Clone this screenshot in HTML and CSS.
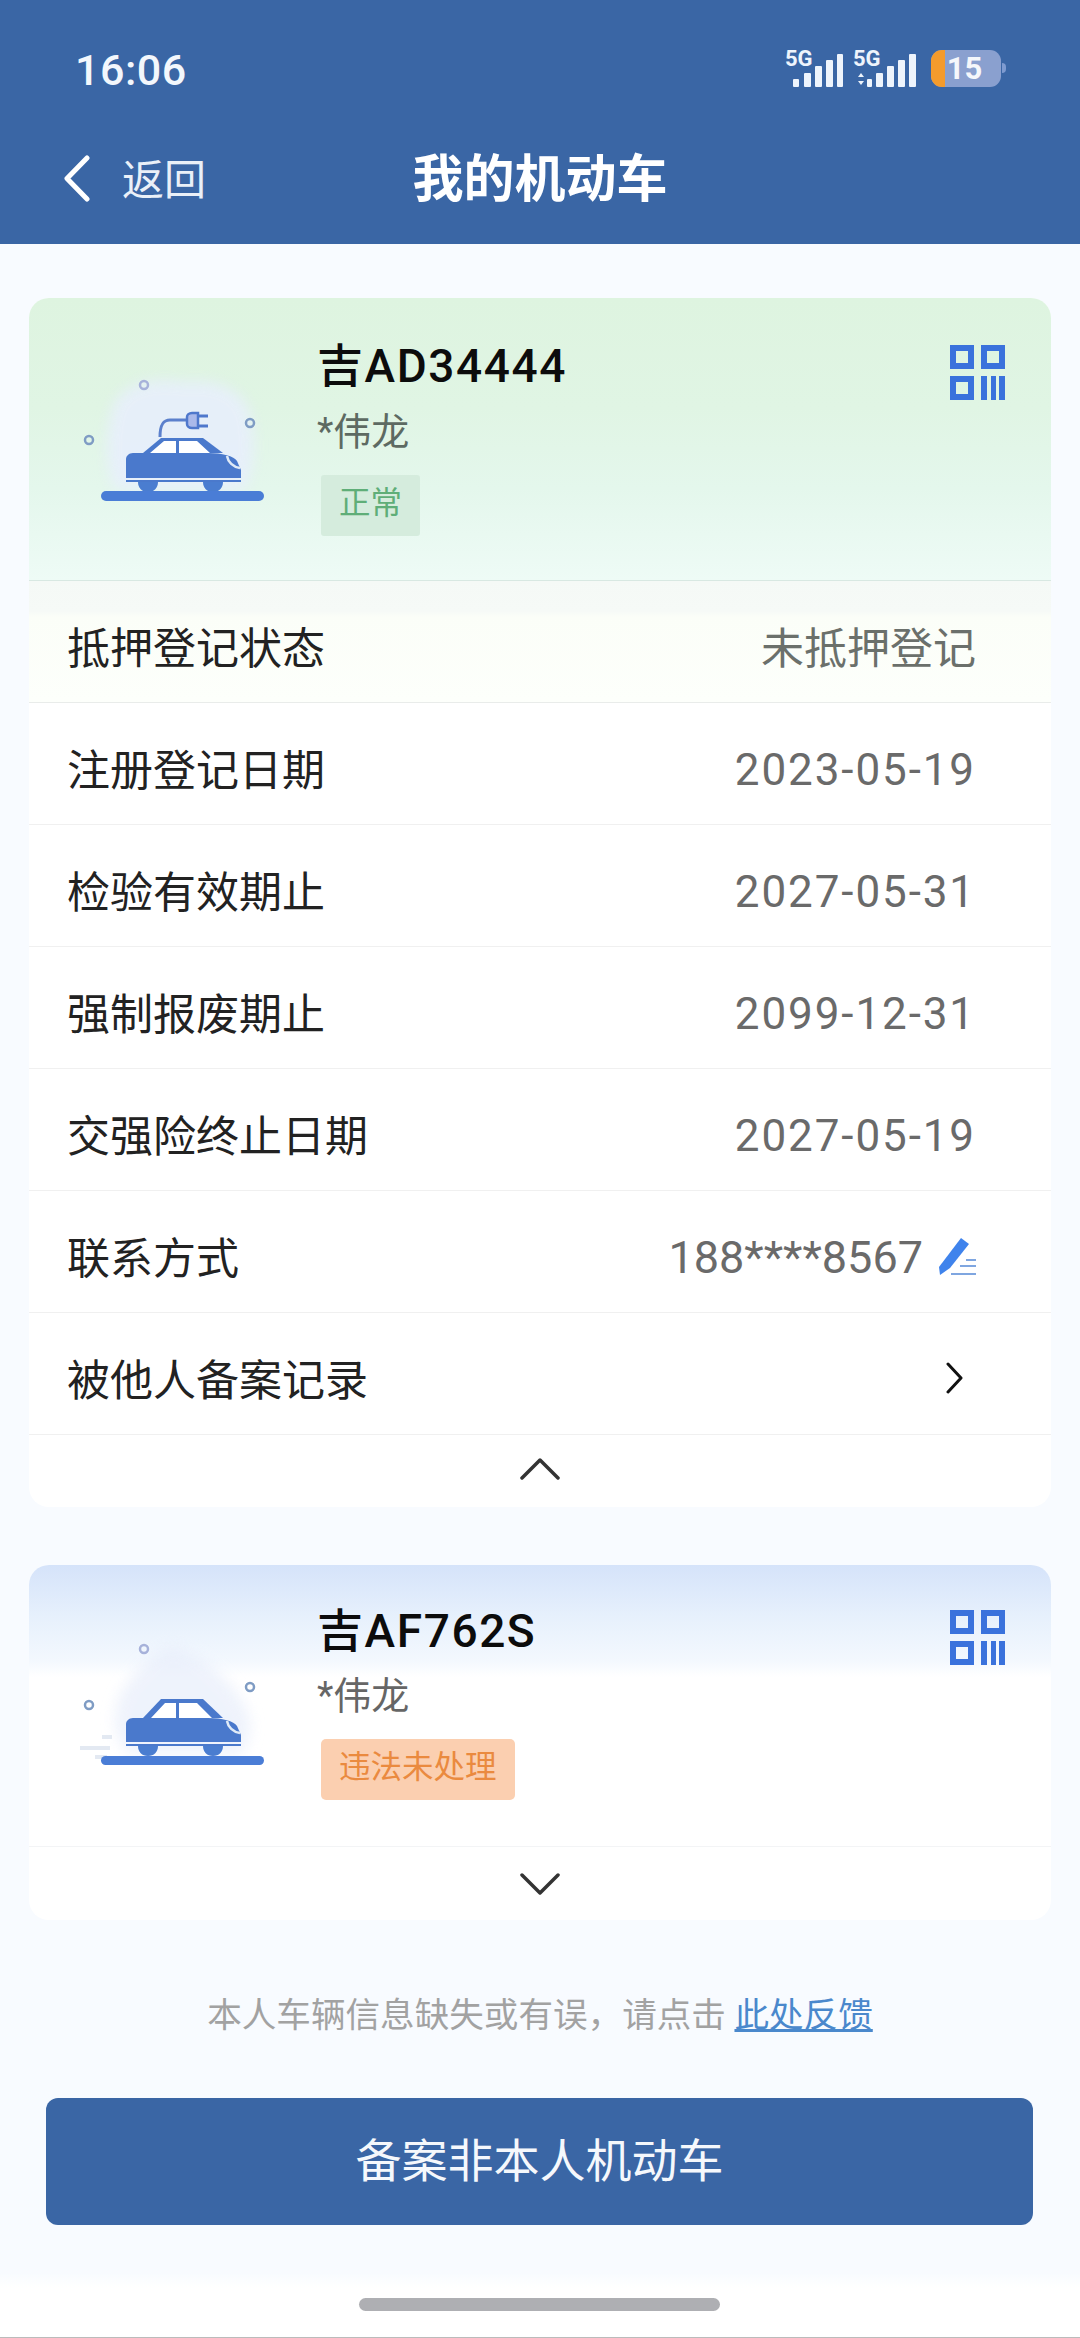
FILE: index.html

```html
<!DOCTYPE html>
<html lang="zh-CN">
<head>
    <meta charset="UTF-8">
    <meta name="viewport" content="width=device-width, initial-scale=1.0">
    <title>我的机动车</title>
    <link rel="stylesheet" href="styles.css">
</head>
<body>
    <header class="top">
        <div class="status">
            <span class="clock">16:06</span>
            <div class="status-right">
                <svg class="signal" width="136" height="43" viewBox="-6 -6 136 43">
                    <text x="-2" y="16" class="signal-text">5G</text>
                    <rect x="6" y="29" width="6" height="8" rx="1"/>
                    <rect x="17" y="23" width="7" height="14" rx="1"/>
                    <rect x="28" y="16" width="7" height="21" rx="1"/>
                    <rect x="39" y="10" width="7" height="27" rx="1"/>
                    <rect x="50" y="4" width="6" height="33" rx="1"/>
                    <text x="66" y="16" class="signal-text">5G</text>
                    <path d="M71 27l3-4 3 4zM71 31l3 4 3-4z"/>
                    <rect x="80" y="29" width="5" height="8" rx="1"/>
                    <rect x="89" y="23" width="7" height="14" rx="1"/>
                    <rect x="100" y="16" width="7" height="21" rx="1"/>
                    <rect x="111" y="10" width="7" height="27" rx="1"/>
                    <rect x="122" y="4" width="7" height="33" rx="1"/>
                </svg>
                <div class="battery">
                    <span class="battery-fill"></span>
                    <span class="battery-num">15</span>
                </div>
                <span class="battery-nub"></span>
            </div>
        </div>
        <nav class="nav">
            <a class="back">
                <svg width="30" height="47" viewBox="0 0 30 47"><path d="M25 3L5 23.5 25 44" fill="none" stroke="#fff" stroke-width="5" stroke-linecap="round" stroke-linejoin="round"/></svg>
                <span>返回</span>
            </a>
            <h1>我的机动车</h1>
            <span></span>
        </nav>
    </header>

    <main class="content">
        <section class="card">
            <div class="car-head car-head-green">
                <svg class="car-pic" width="200" height="160" viewBox="0 0 200 160">
                    <defs>
                        <filter id="soft" x="-20%" y="-20%" width="140%" height="140%"><feGaussianBlur stdDeviation="7"/></filter>
                    </defs>
                    <path d="M32 40C40 12 75 6 105 12c30-4 62 8 66 36 5 30 3 52-8 72H36C24 95 26 65 32 40z" fill="#e8eefe" opacity=".8" filter="url(#soft)"/>
                    <g fill="none" stroke-width="2.5">
                        <circle cx="64" cy="15" r="4" stroke="#a7b2da"/>
                        <circle cx="170" cy="53" r="4" stroke="#7f9cc4"/>
                        <circle cx="9" cy="70" r="4" stroke="#7f9cc4"/>
                    </g>
                    <path d="M80 67c0-12 3-17 10-17h18" fill="none" stroke="#5b80cc" stroke-width="3"/>
                    <path d="M118 46h10M118 56h10" stroke="#4f78cc" stroke-width="3"/>
                    <path d="M112 43h6v15h-6c-3 0-5-2-5-4v-7c0-2 2-4 5-4z" fill="#aab9ea" stroke="#4f78cc" stroke-width="2.5"/>
                    <path d="M63 83l18-15h42l20 15z" fill="#4a79cc"/>
                    <path d="M70 83l14-12h12v12zM99 71h18l13 12H99z" fill="#fff"/>
                    <path d="M53 83h75c14 0 26 3 29 8l4 9v8H46V89c0-3 3-6 7-6z" fill="#4a79cc"/>
                    <path d="M147 86c1 6 6 11 13 12" fill="none" stroke="#dfeaf7" stroke-width="2.5"/>
                    <path d="M46 111h115" stroke="#4a79cc" stroke-width="2"/>
                    <path d="M58 112h20c0 6-4 10-10 10s-10-4-10-10zM123 112h20c0 6-4 10-10 10s-10-4-10-10z" fill="#4a7dd0"/>
                    <rect x="21" y="121" width="163" height="10" rx="5" fill="#4a7dd6"/>
                </svg>
                <div class="car-info">
                    <div class="plate">吉AD34444</div>
                    <div class="owner">*伟龙</div>
                    <span class="tag tag-ok">正常</span>
                </div>
                <svg class="qr" width="55" height="55" viewBox="0 0 55 55">
                    <path fill-rule="evenodd" d="M0 0h24v24H0zM6 6v12h12V6zM31 0h24v24H31zM37 6v12h12V6zM0 31h24v24H0zM6 37v12h12V37zM31 31h6v24h-6zM41 31h5v24h-5zM49 31h6v24h-6z"/>
                </svg>
            </div>
            <div class="row row-tint">
                <span class="row-label">抵押登记状态</span>
                <span class="row-value">未抵押登记</span>
            </div>
            <div class="row">
                <span class="row-label">注册登记日期</span>
                <span class="row-value row-date">2023-05-19</span>
            </div>
            <div class="row">
                <span class="row-label">检验有效期止</span>
                <span class="row-value row-date">2027-05-31</span>
            </div>
            <div class="row">
                <span class="row-label">强制报废期止</span>
                <span class="row-value row-date">2099-12-31</span>
            </div>
            <div class="row">
                <span class="row-label">交强险终止日期</span>
                <span class="row-value row-date">2027-05-19</span>
            </div>
            <div class="row">
                <span class="row-label">联系方式</span>
                <span class="row-value row-phone">
                    188****8567
                    <svg class="pencil" width="39" height="39" viewBox="0 0 39 39">
                        <path d="M23 0l8 6-19 24-10 7-1-8z" fill="#3f83ec"/>
                        <path d="M28 22h10M22 28h16M13 36h25" stroke="#7fa6e0" stroke-width="2"/>
                    </svg>
                </span>
            </div>
            <div class="row">
                <span class="row-label">被他人备案记录</span>
                <svg class="arrow-right" width="17" height="32" viewBox="0 0 17 32"><path d="M2 2l13 14L2 30" fill="none" stroke="#111" stroke-width="3" stroke-linecap="round" stroke-linejoin="round"/></svg>
            </div>
            <div class="fold fold-open">
                <svg width="40" height="23" viewBox="0 0 40 23"><path d="M2 21L20 3l18 18" fill="none" stroke="#333" stroke-width="3.5" stroke-linecap="round" stroke-linejoin="round"/></svg>
            </div>
        </section>

        <section class="card card-second">
            <div class="car-head car-head-blue">
                <svg class="car-pic" width="200" height="160" viewBox="0 0 200 160">
                    <path d="M50 120C22 90 32 45 90 10c40 10 75 50 80 75 2 14-3 26-10 35z" fill="#e8eefb" opacity=".7" filter="url(#soft)"/>
                    <path d="M0 113h30M22 102h10M15 122h12" stroke="#e3e9f2" stroke-width="4"/>
                    <g fill="none" stroke-width="2.5">
                        <circle cx="64" cy="14" r="4" stroke="#a7b2da"/>
                        <circle cx="170" cy="52" r="4" stroke="#7f9cc4"/>
                        <circle cx="9" cy="70" r="4" stroke="#7f9cc4"/>
                    </g>
                    <path d="M63 83l18-19h42l20 19z" fill="#4a79cc"/>
                    <path d="M71 83l14-15h11v15zM99 68h18l15 15H99z" fill="#fff"/>
                    <path d="M53 83h75c14 0 26 3 29 8l4 9v7H46V89c0-3 3-6 7-6z" fill="#4a79cc"/>
                    <path d="M147 86c1 6 6 11 13 12" fill="none" stroke="#dfeaf7" stroke-width="2.5"/>
                    <path d="M46 110h115" stroke="#4a79cc" stroke-width="2"/>
                    <path d="M58 111h20c0 6-4 10-10 10s-10-4-10-10zM123 111h20c0 6-4 10-10 10s-10-4-10-10z" fill="#4a7dd0"/>
                    <rect x="21" y="121" width="163" height="9" rx="4.5" fill="#4a7dd6"/>
                </svg>
                <div class="car-info">
                    <div class="plate">吉AF762S</div>
                    <div class="owner">*伟龙</div>
                    <span class="tag tag-warn">违法未处理</span>
                </div>
                <svg class="qr" width="55" height="55" viewBox="0 0 55 55">
                    <path fill-rule="evenodd" d="M0 0h24v24H0zM6 6v12h12V6zM31 0h24v24H31zM37 6v12h12V6zM0 31h24v24H0zM6 37v12h12V37zM31 31h6v24h-6zM41 31h5v24h-5zM49 31h6v24h-6z"/>
                </svg>
            </div>
            <div class="fold">
                <svg width="40" height="22" viewBox="0 0 40 22"><path d="M2 2l18 18L38 2" fill="none" stroke="#333" stroke-width="3.5" stroke-linecap="round" stroke-linejoin="round"/></svg>
            </div>
        </section>

        <p class="feedback">本人车辆信息缺失或有误，请点击 <a class="feedback-link">此处反馈</a></p>
        <button class="add-btn" type="button">备案非本人机动车</button>
    </main>

    <footer class="home-area">
        <span class="home-bar"></span>
    </footer>
</body>
</html>
```

FILE: styles.css

```css
* {
    box-sizing: border-box;
}
html, body {
    margin: 0;
    padding: 0;
}
body {
    width: 1080px;
    height: 2338px;
    overflow: hidden;
    display: flex;
    flex-direction: column;
    background-color: #f8fbff;
    font-family: Roboto, "Noto Sans CJK SC", sans-serif;
    color: #222;
}

/* top bar */
.top {
    height: 244px;
    background-color: #3a66a5;
    color: #fff;
    flex: none;
}
.status {
    height: 110px;
    padding: 50px 74px 0 75px;
    display: flex;
    justify-content: space-between;
}
.clock {
    font-size: 43px;
    font-weight: 500;
    line-height: 40px;
    color: #f3f7fc;
    letter-spacing: 0.5px;
}
.status-right {
    display: flex;
    align-items: flex-start;
}
.signal {
    fill: #eef4fc;
    margin: -6px 14px 0 0;
}
.signal-text {
    font-size: 22px;
    font-weight: 700;
}
.battery {
    position: relative;
    width: 70px;
    height: 37px;
    padding-right: 3px;
    border-radius: 11px;
    background-color: #8aa0cf;
    overflow: hidden;
    text-align: center;
}
.battery-fill {
    position: absolute;
    left: 0;
    top: 0;
    bottom: 0;
    width: 14px;
    background-color: #f49b2c;
}
.battery-num {
    position: relative;
    display: block;
    font-size: 31px;
    font-weight: 700;
    line-height: 37px;
    color: #f5f7fb;
}
.battery-nub {
    width: 4px;
    height: 10px;
    margin: 13px 0 0 1px;
    border-radius: 0 4px 4px 0;
    background-color: #7f9bd0;
}
.nav {
    height: 134px;
    padding-left: 65px;
    display: grid;
    grid-template-columns: 1fr auto 1fr;
    align-items: start;
    margin-right: 65px;
}
.back {
    display: flex;
    align-items: center;
    gap: 30px;
    height: 47px;
    margin-top: 43px;
    font-size: 42px;
    color: #eaf0f8;
}
.back svg {
    margin: 3px 0 0 -3px;
}
.nav h1 {
    margin: 41px 0 0;
    font-size: 51px;
    line-height: 58px;
    font-weight: 700;
    color: #fff;
}

/* cards */
.content {
    flex: 1;
    padding: 54px 29px 0;
}
.card {
    width: 1022px;
    background-color: #fff;
    border-radius: 20px;
    overflow: hidden;
}
.card-second {
    margin-top: 58px;
}
.car-head {
    display: flex;
    align-items: flex-start;
    height: 283px;
    border-bottom: 1px solid #d8e8e2;
}
.car-head-green {
    background: linear-gradient(#def4e0 0, #e0f5e4 110px, #e4f7ec 190px, #eefbf6 282px);
}
.car-head-blue {
    height: 282px;
    border-bottom-color: #f3f4f6;
    background: linear-gradient(#d5e3fa 0, #e6f0fc 50px, #f3f8fe 95px, #fff 112px);
}
.car-pic {
    flex: none;
    margin: 72px 0 0 51px;
}
.car-head-blue .car-pic {
    margin-top: 70px;
}
.car-info {
    flex: 1;
    padding: 38px 0 0 37px;
}
.car-head-blue .car-info {
    padding-top: 36px;
}
.plate {
    font-size: 46px;
    line-height: 60px;
    font-weight: 500;
    letter-spacing: 1.6px;
    color: #0c0c0c;
}
.owner {
    margin-top: 11px;
    font-size: 38px;
    line-height: 50px;
    color: #5d6a62;
}
.car-head-blue .owner {
    color: #666;
    margin-top: 10px;
}
.tag {
    display: inline-block;
    margin: 18px 0 0 4px;
    padding: 0 18px;
    height: 61px;
    font-size: 31.5px;
    line-height: 57px;
    border-radius: 3px;
}
.tag-ok {
    background-color: #d5ecdd;
    color: #5fae78;
}
.tag-warn {
    background-color: #fbcfb0;
    color: #ea8a3f;
    border-radius: 5px;
}
.qr {
    flex: none;
    margin: 47px 46px 0 0;
    fill: #3a72dc;
}
.car-head-blue .qr {
    margin-top: 45px;
}

/* rows */
.row {
    height: 122px;
    padding: 6px 75px 0 38px;
    display: flex;
    align-items: center;
    justify-content: space-between;
    border-bottom: 1px solid #f0f0f0;
}
.row-tint {
    background: linear-gradient(#f5f9f6 0, #f6faf7 30px, #fbfef8 36px, #fdfffb 120px);
    border-bottom-color: #e9ecea;
}
.row-label {
    font-size: 43px;
    color: #222;
}
.row-value {
    font-size: 43px;
    color: #6b706b;
}
.row-date {
    margin-top: 6px;
    font-size: 44px;
    letter-spacing: 1.9px;
    color: #6a6a6a;
}
.row-phone {
    display: flex;
    align-items: center;
    gap: 15px;
    margin-top: 6px;
    margin-right: 2px;
    font-size: 45px;
    color: #6a6a6a;
}
.pencil {
    margin-right: -3px;
}
.arrow-right {
    margin: 2px 13px 0 0;
}
.fold {
    height: 73px;
    display: flex;
    align-items: center;
    justify-content: center;
}
.fold-open {
    height: 72px;
    padding-bottom: 5px;
}

/* bottom */
.feedback {
    margin: 72px 0 0;
    font-size: 34.6px;
    line-height: 46px;
    text-align: center;
    color: #a2a2a2;
}
.feedback-link {
    color: #4a88cc;
    text-decoration: underline;
}
.add-btn {
    display: block;
    width: 987px;
    height: 127px;
    margin: 60px 0 0 17px;
    padding: 0 0 9px;
    border: none;
    border-radius: 12px;
    background-color: #3a66a5;
    color: #f5f8fc;
    font-family: inherit;
    font-size: 46px;
}
.home-area {
    flex: none;
    height: 65px;
    padding-top: 25px;
    padding-right: 2px;
    display: flex;
    justify-content: center;
    align-items: flex-start;
    background: linear-gradient(#f8fbff, #fff 14px);
    border-bottom: 1px solid #bbb;
}
.home-bar {
    width: 361px;
    height: 13px;
    border-radius: 7px;
    background-color: #aeafb3;
}
```
